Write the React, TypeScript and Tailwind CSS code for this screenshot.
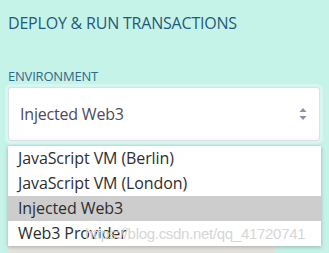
import React from 'react';

const options = ['JavaScript VM (Berlin)', 'JavaScript VM (London)', 'Injected Web3', 'Web3 Provider'];

const App: React.FC = () => {
  const selected = 'Injected Web3';

  return (
    <div
      className="w-[329px] h-[253px] overflow-hidden bg-[#c6f3e8] pl-2 pr-[9px] pt-[11px]"
      style={{ fontFamily: '"Open Sans", "Noto Sans", sans-serif' }}
    >
      <h1 className="text-[16px] leading-6 text-[#1f5a7c] tracking-[-0.2px]">DEPLOY &amp; RUN TRANSACTIONS</h1>

      <div className="mt-[33px] text-[13px] leading-4 text-[#30688a] tracking-[-0.2px]">ENVIRONMENT</div>

      <div className="relative mt-[3px]">
        {/* select with soft focus ring */}
        <div className="rounded-[3px] ring-[3px] ring-[#d6f7ee]">
          <div className="h-[54px] flex items-center justify-between bg-white border border-[#dcdfe8] rounded-[3px] pl-[11px] pr-[11px] shadow-[inset_0_-6px_6px_-6px_rgba(0,0,0,0.06)]">
            <span className="text-[16px] text-[#4b4b5c] tracking-[-0.2px]">{selected}</span>
            <svg width="8" height="12" viewBox="0 0 8 12" className="mr-[1px]">
              <path d="M4 0 L7.5 4 H0.5 Z" fill="#8b90ae" />
              <path d="M4 12 L7.5 8 H0.5 Z" fill="#8b90ae" />
            </svg>
          </div>
        </div>

        {/* element behind the popup */}
        <div className="absolute left-0 top-[159px] w-[267px] h-[20px] bg-[#e4e2dc]" />

        {/* open options list */}
        <div className="absolute left-0 top-[59px] w-[313px] bg-white shadow-[0_1px_4px_rgba(0,0,0,0.25)]">
          {options.map((o) => (
            <div
              key={o}
              className={`h-[25px] leading-[25px] pl-[10px] text-[16px] text-[#2e2e2e] tracking-[-0.1px] ${
                o === selected ? 'bg-[#cdcdcd]' : ''
              }`}
            >
              {o}
            </div>
          ))}
          <span
            className="absolute left-[77px] top-[75px] leading-[25px] text-[15px] text-[#d6d6d6] tracking-[-0.3px] whitespace-nowrap"
            style={{ fontFamily: '"Liberation Sans", Arial, sans-serif' }}
          >
            https://blog.csdn.net/qq_41720741
          </span>
        </div>
      </div>
    </div>
  );
};

export default App;
